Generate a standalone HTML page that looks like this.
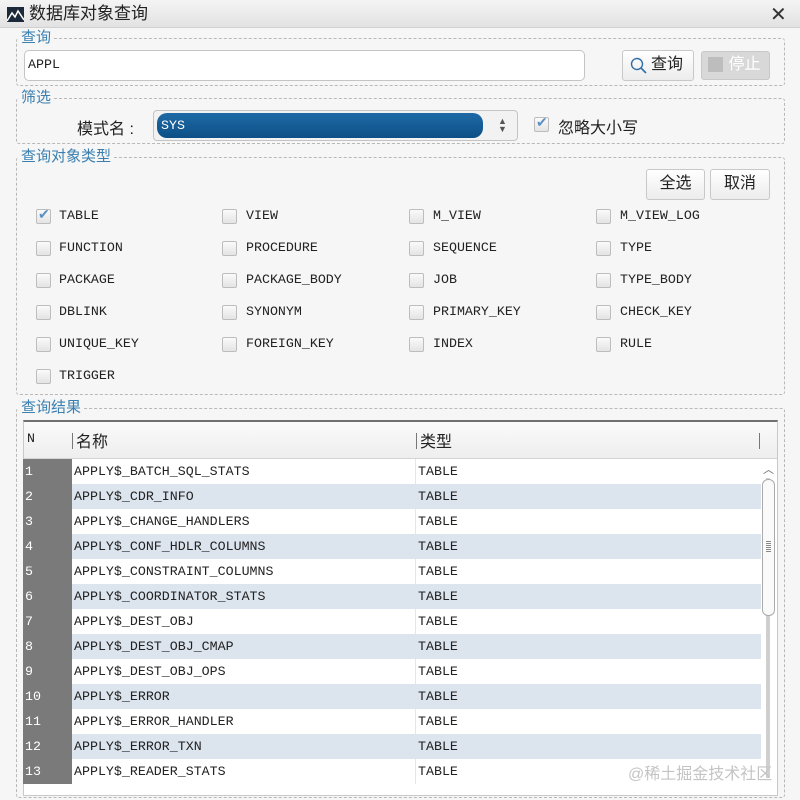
<!DOCTYPE html><html><head><meta charset="utf-8"><style>
*{box-sizing:border-box;margin:0;padding:0}
body{width:800px;height:800px;background:#f6f6f6;position:relative;overflow:hidden;font-family:"Liberation Sans","Noto Sans CJK SC",sans-serif;color:#222}
.a{position:absolute}
.title{left:0;top:0;width:800px;height:28px;background:linear-gradient(#f4f4f4,#e2e2e2);border-bottom:1px solid #d0d0d0}
.grp{position:absolute;border:1px dashed #b8b8b8;border-radius:3px}
.lg{position:absolute;background:#f6f6f6;color:#3a7fb0;font-size:15px;padding:0 3px;line-height:18px}
.mono{font-family:"Liberation Mono","Noto Sans CJK SC",monospace;font-size:13.3px}
.cb{position:absolute;width:15px;height:15px;border:1px solid #bdbdbd;border-radius:2px;background:linear-gradient(#fafafa,#e4e4e4)}
.btn{position:absolute;border:1px solid #c8c8c8;border-radius:3px;background:linear-gradient(#fff,#ececec);font-size:16px;text-align:center}
.row{position:absolute;left:23px;width:738px;height:25px;font-family:"Liberation Mono",monospace;font-size:13.3px;line-height:25px}
.row .n{position:absolute;left:0;width:49px;height:25px;background:#7a7a7a;color:#fff;padding-left:2px}
.row .c1{position:absolute;left:51px}
.row .c2{position:absolute;left:395px}
.row .sep{position:absolute;left:392px;top:0;width:1px;height:25px;background:#e6e6e6}
</style></head><body>
<div class="a title"></div>
<svg class="a" style="left:7px;top:7px" width="17" height="15"><rect width="17" height="15" fill="#1a2a3a"/><path d="M0 14 L5 6 L8 10 L11 4 L17 13" stroke="#fff" stroke-width="1.5" fill="none"/></svg>
<div class="a" style="left:29px;top:3px;font-size:17px;line-height:22px">数据库对象查询</div>
<div class="a" style="left:770px;top:2px;font-size:20px;color:#333">✕</div>

<div class="grp" style="left:16px;top:38px;width:769px;height:48px"></div>
<div class="lg" style="left:18px;top:29px">查询</div>
<div class="a" style="left:24px;top:50px;width:561px;height:31px;background:#fff;border:1px solid #c4c4c4;border-radius:5px"></div>
<div class="a mono" style="left:28px;top:57px">APPL</div>
<div class="btn" style="left:622px;top:50px;width:72px;height:31px;line-height:28px;padding-left:18px">查询</div>
<svg class="a" style="left:630px;top:57px" width="18" height="18"><circle cx="7" cy="7" r="5.5" stroke="#2f6fa8" stroke-width="1.4" fill="none"/><path d="M11 11 L16 16" stroke="#2f6fa8" stroke-width="1.6"/></svg>
<div class="btn" style="left:701px;top:51px;width:69px;height:29px;background:#d8d8d8;color:#fff;line-height:26px;padding-left:18px">停止</div>
<div class="a" style="left:708px;top:57px;width:15px;height:15px;background:#bdbdbd"></div>

<div class="grp" style="left:16px;top:98px;width:769px;height:46px"></div>
<div class="lg" style="left:18px;top:89px">筛选</div>
<div class="a" style="left:77px;top:115px;font-size:16px">模式名 :</div>
<div class="a" style="left:153px;top:110px;width:365px;height:31px;background:#f2f2f2;border:1px solid #c4c4c4;border-radius:4px"></div>
<div class="a mono" style="left:157px;top:113px;width:326px;height:25px;background:linear-gradient(#1e6aa6,#0d4f86);border-radius:10px;color:#fff;line-height:25px;padding-left:4px">SYS</div>
<div class="a" style="left:498px;top:117px;font-size:9px;color:#555;line-height:8px">▲<br>▼</div>
<div class="cb" style="left:534px;top:117px"></div><div class="a" style="left:536px;top:114px;color:#5b90c4;font-size:14px">✔</div>
<div class="a" style="left:558px;top:114px;font-size:16px">忽略大小写</div>

<div class="grp" style="left:16px;top:157px;width:769px;height:238px"></div>
<div class="lg" style="left:18px;top:148px">查询对象类型</div>
<div class="btn" style="left:646px;top:169px;width:59px;height:31px;line-height:28px">全选</div>
<div class="btn" style="left:710px;top:169px;width:60px;height:31px;line-height:28px">取消</div>

<div id="cbs"></div>
<script></script>
<!-- checkboxes -->
<div class="cb" style="left:36px;top:209px"></div><div class="a" style="left:38px;top:206px;color:#5b90c4;font-size:14px">✔</div>
<div class="a mono" style="left:59px;top:208px">TABLE</div>
<div class="cb" style="left:222px;top:209px"></div><div class="a mono" style="left:246px;top:208px">VIEW</div>
<div class="cb" style="left:409px;top:209px"></div><div class="a mono" style="left:433px;top:208px">M_VIEW</div>
<div class="cb" style="left:596px;top:209px"></div><div class="a mono" style="left:620px;top:208px">M_VIEW_LOG</div>

<div class="cb" style="left:36px;top:241px"></div><div class="a mono" style="left:59px;top:240px">FUNCTION</div>
<div class="cb" style="left:222px;top:241px"></div><div class="a mono" style="left:246px;top:240px">PROCEDURE</div>
<div class="cb" style="left:409px;top:241px"></div><div class="a mono" style="left:433px;top:240px">SEQUENCE</div>
<div class="cb" style="left:596px;top:241px"></div><div class="a mono" style="left:620px;top:240px">TYPE</div>

<div class="cb" style="left:36px;top:273px"></div><div class="a mono" style="left:59px;top:272px">PACKAGE</div>
<div class="cb" style="left:222px;top:273px"></div><div class="a mono" style="left:246px;top:272px">PACKAGE_BODY</div>
<div class="cb" style="left:409px;top:273px"></div><div class="a mono" style="left:433px;top:272px">JOB</div>
<div class="cb" style="left:596px;top:273px"></div><div class="a mono" style="left:620px;top:272px">TYPE_BODY</div>

<div class="cb" style="left:36px;top:305px"></div><div class="a mono" style="left:59px;top:304px">DBLINK</div>
<div class="cb" style="left:222px;top:305px"></div><div class="a mono" style="left:246px;top:304px">SYNONYM</div>
<div class="cb" style="left:409px;top:305px"></div><div class="a mono" style="left:433px;top:304px">PRIMARY_KEY</div>
<div class="cb" style="left:596px;top:305px"></div><div class="a mono" style="left:620px;top:304px">CHECK_KEY</div>

<div class="cb" style="left:36px;top:337px"></div><div class="a mono" style="left:59px;top:336px">UNIQUE_KEY</div>
<div class="cb" style="left:222px;top:337px"></div><div class="a mono" style="left:246px;top:336px">FOREIGN_KEY</div>
<div class="cb" style="left:409px;top:337px"></div><div class="a mono" style="left:433px;top:336px">INDEX</div>
<div class="cb" style="left:596px;top:337px"></div><div class="a mono" style="left:620px;top:336px">RULE</div>

<div class="cb" style="left:36px;top:369px"></div><div class="a mono" style="left:59px;top:368px">TRIGGER</div>

<div class="grp" style="left:16px;top:408px;width:769px;height:390px"></div>
<div class="lg" style="left:18px;top:399px">查询结果</div>
<div class="a" style="left:23px;top:420px;width:755px;height:376px;background:#fff;border:1px solid #c8c8c8;border-top:2px solid #707070"></div>
<div class="a" style="left:24px;top:422px;width:753px;height:37px;background:linear-gradient(#fafafa,#eeeeee);border-bottom:1px solid #d4d4d4"></div>
<div class="a mono" style="left:27px;top:431px">N</div>
<div class="a" style="left:72px;top:433px;width:1px;height:16px;background:#777"></div>
<div class="a" style="left:76px;top:428px;font-size:16px">名称</div>
<div class="a" style="left:416px;top:433px;width:1px;height:16px;background:#777"></div>
<div class="a" style="left:420px;top:428px;font-size:16px">类型</div>
<div class="a" style="left:759px;top:433px;width:1px;height:16px;background:#777"></div>

<div class="row" style="top:459px;background:#fff"><div class="n">1</div><div class="c1">APPLY$_BATCH_SQL_STATS</div><div class="sep"></div><div class="c2">TABLE</div></div>
<div class="row" style="top:484px;background:#dce4ee"><div class="n">2</div><div class="c1">APPLY$_CDR_INFO</div><div class="c2">TABLE</div></div>
<div class="row" style="top:509px;background:#fff"><div class="n">3</div><div class="c1">APPLY$_CHANGE_HANDLERS</div><div class="sep"></div><div class="c2">TABLE</div></div>
<div class="row" style="top:534px;background:#dce4ee"><div class="n">4</div><div class="c1">APPLY$_CONF_HDLR_COLUMNS</div><div class="c2">TABLE</div></div>
<div class="row" style="top:559px;background:#fff"><div class="n">5</div><div class="c1">APPLY$_CONSTRAINT_COLUMNS</div><div class="sep"></div><div class="c2">TABLE</div></div>
<div class="row" style="top:584px;background:#dce4ee"><div class="n">6</div><div class="c1">APPLY$_COORDINATOR_STATS</div><div class="c2">TABLE</div></div>
<div class="row" style="top:609px;background:#fff"><div class="n">7</div><div class="c1">APPLY$_DEST_OBJ</div><div class="sep"></div><div class="c2">TABLE</div></div>
<div class="row" style="top:634px;background:#dce4ee"><div class="n">8</div><div class="c1">APPLY$_DEST_OBJ_CMAP</div><div class="c2">TABLE</div></div>
<div class="row" style="top:659px;background:#fff"><div class="n">9</div><div class="c1">APPLY$_DEST_OBJ_OPS</div><div class="sep"></div><div class="c2">TABLE</div></div>
<div class="row" style="top:684px;background:#dce4ee"><div class="n">10</div><div class="c1">APPLY$_ERROR</div><div class="c2">TABLE</div></div>
<div class="row" style="top:709px;background:#fff"><div class="n">11</div><div class="c1">APPLY$_ERROR_HANDLER</div><div class="sep"></div><div class="c2">TABLE</div></div>
<div class="row" style="top:734px;background:#dce4ee"><div class="n">12</div><div class="c1">APPLY$_ERROR_TXN</div><div class="c2">TABLE</div></div>
<div class="row" style="top:759px;background:#fff"><div class="n">13</div><div class="c1">APPLY$_READER_STATS</div><div class="sep"></div><div class="c2">TABLE</div></div>

<div class="a" style="left:761px;top:460px;width:16px;height:324px;background:#fff"></div>
<div class="a" style="left:763px;top:461px;font-size:11px;color:#666">︿</div>
<div class="a" style="left:766px;top:478px;width:4px;height:300px;background:#cfcfcf"></div>
<div class="a" style="left:762px;top:479px;width:13px;height:137px;background:#fafafa;border:1px solid #aaa;border-radius:6px"></div>
<div class="a" style="left:766px;top:541px;width:5px;height:12px;background:repeating-linear-gradient(#888 0 1px,transparent 1px 2px)"></div>
<div class="a" style="left:628px;top:760px;font-size:16px;color:#c4c4c4">@稀土掘金技术社区</div>
</body></html>
